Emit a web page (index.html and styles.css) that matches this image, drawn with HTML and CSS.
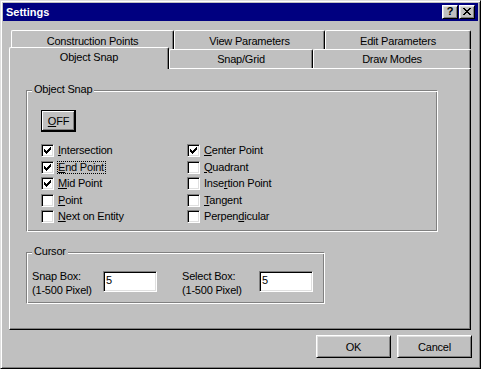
FILE: index.html
```html
<!DOCTYPE html>
<html>
<head>
  <meta charset="utf-8">
  <title>Settings</title>
  <link rel="stylesheet" href="styles.css">
</head>
<body>
  <div class="window">
    <div class="titlebar">
      <span class="title">Settings</span>
      <span class="tbtn help">?</span>
      <span class="tbtn close">
        <svg width="8" height="7" viewBox="0 0 8 7" shape-rendering="crispEdges"><path d="M0 0h2v1H0zM6 0h2v1H6zM1 1h2v1H1zM5 1h2v1H5zM2 2h4v1H2zM3 3h2v1H3zM2 4h4v1H2zM1 5h2v1H1zM5 5h2v1H5zM0 6h2v1H0zM6 6h2v1H6z" fill="#000"/></svg>
      </span>
    </div>

    <div class="tabs">
      <div class="tabrow back">
        <div class="tab t-construct">Construction Points</div>
        <div class="tab t-view">View Parameters</div>
        <div class="tab t-edit">Edit Parameters</div>
      </div>
      <div class="tabrow front">
        <div class="tab t-osnap active">Object Snap</div>
        <div class="tab t-grid">Snap/Grid</div>
        <div class="tab t-draw">Draw Modes</div>
      </div>

      <div class="panel">
        <div class="group osnap">
          <div class="group-label">Object Snap</div>
          <button class="btn default off"><u>O</u>FF</button>
          <div class="checks">
            <div class="check"><span class="box on"><svg width="7" height="7" viewBox="0 0 7 7" shape-rendering="crispEdges"><path d="M6 0h1v1H6zM5 1h2v1H5zM0 2h1v1H0zM4 2h3v1H4zM0 3h2v1H0zM3 3h3v1H3zM0 4h5v1H0zM1 5h3v1H1zM2 6h1v1H2z" fill="#000"/></svg></span><span class="lbl"><u>I</u>ntersection</span></div>
            <div class="check"><span class="box on"><svg width="7" height="7" viewBox="0 0 7 7" shape-rendering="crispEdges"><path d="M6 0h1v1H6zM5 1h2v1H5zM0 2h1v1H0zM4 2h3v1H4zM0 3h2v1H0zM3 3h3v1H3zM0 4h5v1H0zM1 5h3v1H1zM2 6h1v1H2z" fill="#000"/></svg></span><span class="lbl focus"><u>E</u>nd Point</span></div>
            <div class="check"><span class="box on"><svg width="7" height="7" viewBox="0 0 7 7" shape-rendering="crispEdges"><path d="M6 0h1v1H6zM5 1h2v1H5zM0 2h1v1H0zM4 2h3v1H4zM0 3h2v1H0zM3 3h3v1H3zM0 4h5v1H0zM1 5h3v1H1zM2 6h1v1H2z" fill="#000"/></svg></span><span class="lbl"><u>M</u>id Point</span></div>
            <div class="check"><span class="box"></span><span class="lbl"><u>P</u>oint</span></div>
            <div class="check"><span class="box"></span><span class="lbl"><u>N</u>ext on Entity</span></div>
            <div class="check"><span class="box on"><svg width="7" height="7" viewBox="0 0 7 7" shape-rendering="crispEdges"><path d="M6 0h1v1H6zM5 1h2v1H5zM0 2h1v1H0zM4 2h3v1H4zM0 3h2v1H0zM3 3h3v1H3zM0 4h5v1H0zM1 5h3v1H1zM2 6h1v1H2z" fill="#000"/></svg></span><span class="lbl"><u>C</u>enter Point</span></div>
            <div class="check"><span class="box"></span><span class="lbl"><u>Q</u>uadrant</span></div>
            <div class="check"><span class="box"></span><span class="lbl">Inse<u>r</u>tion Point</span></div>
            <div class="check"><span class="box"></span><span class="lbl"><u>T</u>angent</span></div>
            <div class="check"><span class="box"></span><span class="lbl">Perpen<u>d</u>icular</span></div>
          </div>
        </div>

        <div class="group cursor">
          <div class="group-label">Cursor</div>
          <div class="cursor-row">
            <div class="field-label snap">Snap Box:<br>(1-500 Pixel)</div>
            <input class="field" value="5">
            <div class="field-label select">Select Box:<br>(1-500 Pixel)</div>
            <input class="field" value="5">
          </div>
        </div>
      </div>
    </div>

    <div class="actions">
      <button class="btn">OK</button>
      <button class="btn">Cancel</button>
    </div>
  </div>
</body>
</html>
```

FILE: styles.css
```css
body {
  margin: 0;
  background-color: #C0C0C0;
  color: #000000;
  font-family: "Liberation Sans", Arial, sans-serif;
  font-size: 11px;
  letter-spacing: -0.2px;
}
u {
  text-decoration: underline;
}
.window {
  box-sizing: border-box;
  width: 481px;
  height: 369px;
  padding: 2px;
  background-color: #C0C0C0;
  border: 1px solid;
  border-color: #DFDFDF #000000 #000000 #DFDFDF;
  box-shadow: inset 1px 1px #FFFFFF, inset -1px -1px #808080;
}
.titlebar {
  display: flex;
  align-items: center;
  gap: 1px;
  height: 18px;
  padding: 0 3px 0 3px;
  background-color: #000080;
  color: #FFFFFF;
}
.title {
  flex: 1;
  font-weight: bold;
  letter-spacing: 0;
  line-height: 13px;
}
.tbtn {
  box-sizing: border-box;
  display: flex;
  align-items: center;
  justify-content: center;
  width: 16px;
  height: 14px;
  background-color: #C0C0C0;
  color: #000000;
  border: 1px solid;
  border-color: #FFFFFF #000000 #000000 #FFFFFF;
  box-shadow: inset 1px 1px #DFDFDF, inset -1px -1px #808080;
}
.help {
  font-weight: bold;
  font-size: 11px;
  line-height: 11px;
  padding-bottom: 1px;
}
.close svg {
  display: block;
  margin-bottom: 1px;
}
.tabs {
  width: 462px;
  margin: 9px 0 0 6px;
}
.tabrow {
  display: flex;
  height: 19px;
}
.tabrow.back {
  padding-left: 2px;
}
.tab {
  box-sizing: border-box;
  height: 19px;
  padding-top: 4px;
  line-height: 13px;
  text-align: center;
  white-space: nowrap;
  background-color: #C0C0C0;
  border: 1px solid #FFFFFF;
  border-right-color: #000000;
  border-bottom: none;
  border-radius: 2px 2px 0 0;
  box-shadow: inset -1px 0 #808080;
}
.front .tab {
  padding-top: 3px;
}
.t-construct { width: 163px; }
.t-view { width: 151px; }
.t-edit { width: 146px; }
.t-osnap { width: 160px; }
.t-grid { width: 144px; }
.t-draw { width: 158px; }
.tab.active {
  position: relative;
  z-index: 1;
  height: 22px;
  margin-top: -2px;
}
.panel {
  box-sizing: border-box;
  height: 262px;
  padding: 21px 0 0 16px;
  border: 1px solid;
  border-color: #FFFFFF #000000 #000000 #FFFFFF;
  box-shadow: inset -1px -1px #808080;
}
.group {
  box-sizing: border-box;
  border: 1px solid;
  border-color: #808080 #FFFFFF #FFFFFF #808080;
  box-shadow: inset 1px 1px #FFFFFF, inset -1px -1px #808080;
}
.group-label {
  width: fit-content;
  margin: -8px 0 0 -9px;
  padding: 0 2px;
  line-height: 13px;
  background-color: #C0C0C0;
}
.osnap {
  width: 412px;
  padding: 0 0 8px 14px;
}
.cursor {
  width: 299px;
  margin-top: 20px;
  padding: 0 0 6px 5px;
}
.cursor .group-label {
  margin-left: 0;
}
.btn {
  box-sizing: border-box;
  display: block;
  width: 75px;
  height: 23px;
  padding: 0;
  font: inherit;
  letter-spacing: inherit;
  color: #000000;
  background-color: #C0C0C0;
  border: 1px solid;
  border-color: #FFFFFF #000000 #000000 #FFFFFF;
  box-shadow: inset 1px 1px #DFDFDF, inset -1px -1px #808080;
}
.btn.default {
  border-color: #000000;
  box-shadow: inset -1px -1px #000000, inset 1px 1px #FFFFFF, inset -2px -2px #808080;
}
.off {
  width: 35px;
  height: 22px;
  margin-top: 14px;
}
.checks {
  display: grid;
  grid-template-columns: 146px auto;
  grid-template-rows: repeat(5, 13px);
  grid-auto-flow: column;
  row-gap: 3.5px;
  margin-top: 12px;
}
.check {
  display: flex;
  align-items: center;
  height: 13px;
}
.box {
  box-sizing: border-box;
  flex: none;
  width: 13px;
  height: 13px;
  background-color: #FFFFFF;
  border: 1px solid;
  border-color: #808080 #FFFFFF #FFFFFF #808080;
  box-shadow: inset 1px 1px #000000, inset -1px -1px #DFDFDF;
}
.box svg {
  display: block;
  margin: 2px 0 0 2px;
}
.lbl {
  margin-left: 3px;
  padding: 0 1px 0 0;
  line-height: 11px;
  border: 1px solid transparent;
  white-space: nowrap;
}
.lbl.focus {
  border: 1px dotted #000000;
}
.cursor-row {
  display: flex;
  align-items: flex-start;
  margin-top: 11px;
}
.field-label {
  line-height: 14px;
  white-space: nowrap;
}
.field-label.snap {
  width: 71px;
}
.field-label.select {
  width: 77px;
  margin-left: 25px;
}
.field {
  box-sizing: border-box;
  width: 54px;
  height: 21px;
  margin: 2px 0 0 0;
  padding: 0 2px 3px 2px;
  font: inherit;
  letter-spacing: inherit;
  color: #000000;
  background-color: #FFFFFF;
  border: 1px solid;
  border-color: #808080 #FFFFFF #FFFFFF #808080;
  box-shadow: inset 1px 1px #000000, inset -1px -1px #DFDFDF;
  outline: none;
}
.actions {
  display: flex;
  justify-content: flex-end;
  gap: 6px;
  margin-top: 5px;
  padding-right: 6px;
}
```
